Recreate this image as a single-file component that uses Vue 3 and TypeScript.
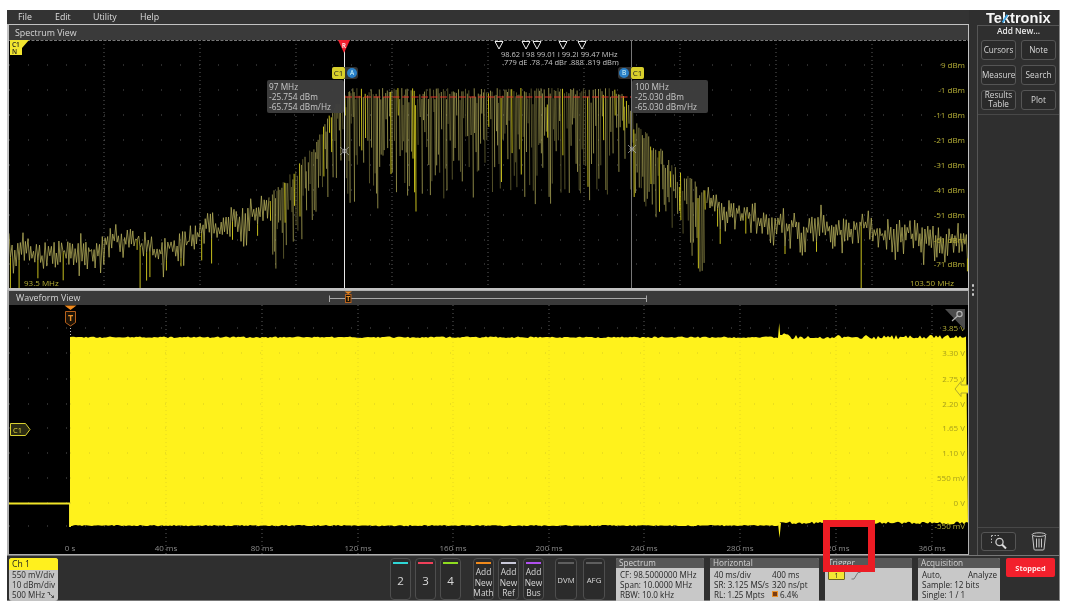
<script setup lang="ts">
function rng(seed: number) {
  let s = seed
  return () => {
    s = (s * 1664525 + 1013904223) >>> 0
    return s / 4294967296
  }
}
const envPts: [number, number][] = [
  [9, 230], [60, 229], [150, 229], [200, 220], [250, 204], [280, 186], [310, 150], [335, 105], [350, 88],
  [620, 88], [640, 125], [680, 170], [710, 192], [740, 204], [968, 217],
]
function env(x: number) {
  for (let i = 1; i < envPts.length; i++) {
    const [a, b] = envPts[i - 1]
    const [c, d] = envPts[i]
    if (x <= c) return b + ((x - a) / (c - a)) * (d - b)
  }
  return 217
}
const r = rng(7)
let dim = ''
let dark = ''
let bright = ''
let walk = 0
let up = true
let x = 9
let connected = false
while (x < 968) {
  const e = env(x)
  const dense = x > 270 && x < 705
  if (dense) {
    const central = x > 345 && x < 625
    const top = e + r() * r() * (central ? 20 : 24)
    const reach = central ? 22 + r() * 92 : 14 + r() * 66
    const lo = top + reach
    const seg = `M${x.toFixed(1)} ${top.toFixed(1)}L${(x + 0.4).toFixed(1)} ${lo.toFixed(1)}`
    const pick = r()
    if (pick < 0.6) dim += seg
    else if (pick < 0.87) dark += seg
    else bright += seg
    x += 1.1 + r() * 1.2
    connected = false
  } else {
    walk = Math.max(-9, Math.min(9, walk + (r() - 0.5) * 7))
    const mid = e + 18 + walk
    const y = up ? mid - r() * 14 : mid + r() * 8 + r() * r() * 26
    dim += `${connected ? 'L' : 'M'}${x.toFixed(1)} ${y.toFixed(1)}`
    connected = true
    if (!up && r() < 0.12) {
      const deep = r() < 0.12 ? 288 : y + 8 + r() * 22
      bright += `M${x.toFixed(1)} ${y.toFixed(1)}V${deep.toFixed(1)}`
    }
    up = !up
    x += 1 + r() * 0.7
  }
}
const traceDim = dim
const traceDark = dark
const traceBright = bright

const r2 = rng(21)
let top = 'M70 526V337'
for (let px = 70; px < 968; px += 2) {
  const y = px < 779 ? 336.5 + r2() * 1.5 : px < 790 ? 333 + r2() * 2 : 335 + r2() * 4.5
  top += `L${px} ${y.toFixed(1)}`
}
let bot = ''
for (let px = 968; px > 70; px -= 2) {
  const y = px < 779 ? 525 + r2() * 1.2 : 521.5 + r2() * 3
  bot += `L${px} ${y.toFixed(1)}`
}
const wavePath = top + bot + 'Z'

const gridX1 = [104, 200, 296, 392, 488, 584, 680, 776, 872]
const gridY1 = [65, 90, 115, 140, 165, 190, 215, 240, 264]
const gridX2 = [166, 262, 358, 453, 549, 644, 740, 836, 932]
const gridY2 = [328, 353, 379, 404, 428, 453, 478, 503, 526]
const dbm = ['9 dBm', '-1 dBm', '-11 dBm', '-21 dBm', '-31 dBm', '-41 dBm', '-51 dBm', '-61 dBm', '-71 dBm']
const volts = ['3.85 V', '3.30 V', '2.75 V', '2.20 V', '1.65 V', '1.10 V', '550 mV', '0 V', '-550 mV']
const times = ['0 s', '40 ms', '80 ms', '120 ms', '160 ms', '200 ms', '240 ms', '280 ms', '320 ms', '360 ms']
const timeX = [70, 166, 262, 358, 453, 549, 644, 740, 836, 932]
const markers = [499, 526, 537, 563, 582]
const menu = ['File', 'Edit', 'Utility', 'Help']
const tools = ['Cursors', 'Note', 'Measure', 'Search', 'Results Table', 'Plot']
const channels = [
  { label: '2', color: '#2fd6d6' },
  { label: '3', color: '#f0405a' },
  { label: '4', color: '#8fdc20' },
]
const adds = [
  { lines: ['Add', 'New', 'Math'], color: '#f08a1c' },
  { lines: ['Add', 'New', 'Ref'], color: '#c8c8d8' },
  { lines: ['Add', 'New', 'Bus'], color: '#b050f0' },
]
</script>

<template>
  <div class="page">
    <div class="scope">
      <div class="upper">
        <div class="left">
          <div class="menu">
            <span v-for="m in menu" :key="m" class="menu-item">{{ m }}</span>
          </div>
          <div class="view view-spectrum">
            <div class="title">Spectrum View</div>
            <div class="plot plot-a">
              <svg class="canvas" width="959" height="248" viewBox="9 40 959 248">
                <line x1="9" x2="968" y1="40.5" y2="40.5" class="edge" />
                <line v-for="gx in gridX1" :key="gx" :x1="gx" :x2="gx" y1="40" y2="288" class="vdot" />
                <line v-for="gy in gridY1" :key="gy" x1="9" x2="968" :y1="gy" :y2="gy" class="hdot" />
                <path :d="traceDark" class="trace-dark" />
                <path :d="traceDim" class="trace" />
                <path :d="traceBright" class="trace-bright" />
                <line x1="345" x2="631" y1="97" y2="97" class="refline" />
                <line x1="344.5" x2="344.5" y1="50" y2="288" class="cursor-a" />
                <line x1="631.5" x2="631.5" y1="40" y2="288" class="cursor-b" />
                <g class="xmark">
                  <circle cx="344.5" cy="151" r="2" />
                  <path d="M340 147l9 8M349 147l-9 8" />
                  <circle cx="632" cy="149" r="2" />
                  <path d="M628 145l8 8M636 145l-8 8" />
                </g>
                <path d="M338 40H350L344 53Z" class="rmark" />
                <text x="344" y="47.5" text-anchor="middle" class="rtext">R</text>
                <path d="M10 40H29L22 48V55H10Z" class="cn" />
                <text x="12" y="46.5" class="cn-text">C1</text>
                <text x="12" y="53.5" class="cn-text">N</text>
                <path v-for="mx in markers" :key="mx" :d="`M${mx - 4} 41.5H${mx + 4}L${mx} 49Z`" class="marker" />
                <text x="501" y="56.5" class="mk">98.62 I 98 99.01 I 99.2I 99.47 MHz</text>
                <text x="502" y="64.5" class="mk">.779 dE .78 .74 dBr .888 .819 dBm</text>
                <text v-for="(t, i) in dbm" :key="t" x="965" :y="gridY1[i] + 3" text-anchor="end" class="axis">{{ t }}</text>
                <text x="24" y="286" class="axis">93.5 MHz</text>
                <text x="954" y="286" text-anchor="end" class="axis">103.50 MHz</text>
              </svg>
              <div class="tag tag-a"><b class="c1">C1</b><i class="dot">A</i></div>
              <div class="tag tag-b"><i class="dot">B</i><b class="c1">C1</b></div>
              <div class="readout readout-a">97 MHz<br />-25.754 dBm<br />-65.754 dBm/Hz</div>
              <div class="readout readout-b">100 MHz<br />-25.030 dBm<br />-65.030 dBm/Hz</div>
            </div>
          </div>
          <div class="view view-wave">
            <div class="title title-wave">
              Waveform View
              <svg class="bracket" width="959" height="14" viewBox="9 291 959 14">
                <path d="M329.5 302V295.5M329.5 298.5H646.5M646.5 295.5V302" class="brk" />
                <path d="M344.5 291.5H352L348.2 294Z" class="orange-fill" />
                <rect x="345.5" y="294.5" width="5.5" height="8" class="t-box" />
                <text x="348.2" y="301" text-anchor="middle" class="t-small">T</text>
              </svg>
            </div>
            <div class="plot plot-b">
              <svg class="canvas" width="959" height="249" viewBox="9 305 959 249">
                <line v-for="gx in gridX2" :key="gx" :x1="gx" :x2="gx" y1="305" y2="554" class="vdot" />
                <line v-for="gy in gridY2" :key="gy" x1="9" x2="968" :y1="gy" :y2="gy" class="hdot" />
                <line x1="70.5" x2="70.5" y1="325" y2="337" class="vdot bright-dot" />
                <path d="M9 503.5H70" class="flat" />
                <path d="M70 503V527" class="flat" />
                <path :d="wavePath" class="wave" />
                <path d="M778 338L779.2 323L780.4 338Z M778 523L779.5 538L781 523Z" class="wave" />
                <line v-for="gx in gridX2" :key="'o' + gx" :x1="gx" :x2="gx" y1="338" y2="524" class="vover" />
                <line v-for="gy in gridY2.slice(1, 8)" :key="'p' + gy" x1="70" x2="968" :y1="gy" :y2="gy" class="hover" />
                <text v-for="(t, i) in volts" :key="t" x="965" :y="gridY2[i] + 3" text-anchor="end" :class="i === 0 || i === 8 ? 'axis' : 'axis-on'">{{ t }}</text>
                <text v-for="(t, i) in times" :key="t" :x="timeX[i]" y="551" text-anchor="middle" class="axis-time">{{ t }}</text>
                <path d="M64.5 305.5H76.5L70.5 310Z" class="orange-fill" />
                <path d="M65.5 311.5H75.5V322.5L70.5 326L65.5 322.5Z" class="t-box" />
                <text x="70.5" y="320.5" text-anchor="middle" class="t-big">T</text>
                <path d="M945 309H965V330Z" class="zoomcorner" />
                <circle cx="959.5" cy="314" r="2.6" class="zoomglass" />
                <path d="M957.5 316L952 321" class="zoomglass" />
                <path d="M968 385H961V381.5L955 389L961 396.5V393H968" class="arrow" />
                <path d="M10.5 423.5H25.5L30 429.5L25.5 435.5H10.5Z" class="c1tag" />
                <text x="13" y="432.5" class="c1tag-text">C1</text>
              </svg>
            </div>
          </div>
        </div>
        <div class="gutter"><i></i><i></i><i></i></div>
        <aside class="side">
          <div class="logo">Te<span class="logo-k">k</span>tronix</div>
          <div class="panel">
            <div class="add">Add New...</div>
            <div class="tools">
              <button v-for="t in tools" :key="t" class="tool">{{ t }}</button>
            </div>
            <div class="rule"></div>
            <div class="panel-fill"></div>
            <div class="rule"></div>
            <div class="panel-foot">
              <button class="tool zoom-btn">
                <svg width="18" height="16" viewBox="0 0 18 16">
                  <path d="M1.5 1.5H9M1.5 1.5V9" class="dash" />
                  <circle cx="9.5" cy="8" r="3.6" class="glass" />
                  <path d="M12 10.5L16 14.5" class="handle" />
                </svg>
              </button>
              <svg class="trash" width="16" height="19" viewBox="0 0 16 19">
                <ellipse cx="8" cy="2.6" rx="6.8" ry="1.8" />
                <path d="M1.5 3.5L3 17.2Q3.2 18 4 18H12Q12.8 18 13 17.2L14.5 3.5M5.5 6.5V15.5M8 6.5V15.5M10.5 6.5V15.5" />
              </svg>
            </div>
          </div>
        </aside>
      </div>
      <div class="bottom">
        <div class="ch">
          <div class="ch-head">Ch 1</div>
          <div class="ch-body">
            <div>550 mV/div</div>
            <div>10 dBm/div</div>
            <div class="ch-last">500 MHz
              <svg width="7" height="6" viewBox="0 0 7 6"><path d="M0.5 0.5H2.5V3M3.5 2.5L6.5 5.5M6.5 3.5V5.5H4.5" class="bw" /></svg>
            </div>
          </div>
        </div>
        <div class="group group-ch">
          <button v-for="c in channels" :key="c.label" class="key key-num">
            <span class="bar" :style="{ background: c.color }"></span>{{ c.label }}
          </button>
        </div>
        <div class="group group-add">
          <button v-for="a in adds" :key="a.lines[2]" class="key key-add">
            <span class="bar" :style="{ background: a.color }"></span>
            <span v-for="l in a.lines" :key="l" class="key-line">{{ l }}</span>
          </button>
        </div>
        <div class="group group-tool">
          <button class="key key-wide"><span class="bar bar-off"></span>DVM</button>
          <button class="key key-wide"><span class="bar bar-off"></span>AFG</button>
        </div>
        <section class="card card-spec">
          <header>Spectrum</header>
          <div class="card-body">
            <div>CF: 98.5000000 MHz</div>
            <div>Span: 10.0000 MHz</div>
            <div>RBW: 10.0 kHz</div>
          </div>
        </section>
        <section class="card card-hor">
          <header>Horizontal</header>
          <div class="card-body cols">
            <span>40 ms/div</span><span>400 ms</span>
            <span>SR: 3.125 MS/s</span><span>320 ns/pt</span>
            <span>RL: 1.25 Mpts</span><span><i class="rl-icon"></i> 6.4%</span>
          </div>
        </section>
        <section class="card card-trig">
          <header>Trigger</header>
          <div class="card-body trig">
            <span class="trig-src">1</span>
            <svg width="10" height="9" viewBox="0 0 10 9"><path d="M0.5 8H3L7 1.5H9.5" class="slope" /></svg>
          </div>
        </section>
        <section class="card card-acq">
          <header>Acquisition</header>
          <div class="card-body">
            <div class="between"><span>Auto,</span><span>Analyze</span></div>
            <div>Sample: 12 bits</div>
            <div>Single: 1 / 1</div>
          </div>
        </section>
        <button class="stopped">Stopped</button>
      </div>
    </div>
    <div class="callout"></div>
  </div>
</template>

<style>
html, body { margin: 0; background: #fff; }
</style>

<style scoped>
.page {
  position: relative;
  width: 1071px;
  height: 607px;
  box-sizing: border-box;
  padding: 10px 11px 6px 7px;
  font-family: "Open Sans", "Liberation Sans", sans-serif;
  overflow: hidden;
  background: #fff;
}
.scope {
  width: 1053px;
  height: 591px;
  display: flex;
  flex-direction: column;
  background: #2f2f2f;
  border-right: 1px solid #888;
  border-bottom: 1px solid #777;
  box-sizing: border-box;
  color: #ddd;
  filter: blur(0.25px);
}
.upper { display: flex; height: 545px; }
.left { width: 962px; display: flex; flex-direction: column; }
.menu {
  height: 14px;
  display: flex;
  align-items: center;
  padding-left: 11px;
  font-size: 8.8px;
  color: #ddd;
  background: #333;
}
.menu-item { width: 37px; }
.menu-item:nth-child(2) { width: 38px; }
.menu-item:nth-child(3) { width: 47px; }
.view { border: 1px solid #c2c2c2; border-left-width: 2px; box-sizing: border-box; border-top-width: 1px; }
.view-spectrum { height: 266px; border-bottom-width: 2px; }
.view-wave { height: 265px; border-bottom-width: 1px; border-color: #b0b0b0; }
.title {
  height: 15px;
  line-height: 15px;
  padding-left: 6px;
  font-size: 8.9px;
  color: #d6d6d6;
  background: #3a3a3a;
}
.title-wave { height: 14px; line-height: 14px; position: relative; padding-left: 7px; }
.bracket { position: absolute; left: 0; top: 0; }
.plot { position: relative; background: #000; overflow: hidden; }
.plot-a { height: 248px; }
.plot-b { height: 249px; }
.canvas { display: block; }
.edge { stroke: #777; stroke-width: 1; stroke-dasharray: 3 1.5; }
.vdot { stroke: #5c5c5c; stroke-width: 1; stroke-dasharray: 1 3; }
.hdot { stroke: #565656; stroke-width: 1; stroke-dasharray: 1 18; }
.bright-dot { stroke: #bbb; stroke-dasharray: 1 2; }
.trace { fill: none; stroke: #b8b25c; stroke-width: 0.75; }
.trace-dark { fill: none; stroke: #5e5a2e; stroke-width: 0.9; }
.trace-bright { fill: none; stroke: #dcd420; stroke-width: 0.9; }
.refline { stroke: #e0302a; stroke-width: 1; stroke-dasharray: 7 2.5; }
.cursor-a { stroke: #e8e8e8; stroke-width: 1; }
.cursor-b { stroke: #777; stroke-width: 1; }
.xmark circle, .xmark path { fill: none; stroke: #b0b0b0; stroke-width: 0.7; }
.rmark { fill: #f4202f; }
.rtext { font-size: 6.5px; font-weight: 700; fill: #ffd8d8; }
.cn { fill: #f2e530; }
.cn-text { font-size: 6.5px; font-weight: 600; fill: #222; }
.marker { fill: #000; stroke: #eee; stroke-width: 1; }
.mk { font-size: 7.5px; fill: #c4c4c4; }
.axis { font-size: 8px; fill: #b5ae35; }
.axis-on { font-size: 8px; fill: #a8a01c; }
.axis-time { font-size: 8px; fill: #8c8c8c; }
.flat { stroke: #f0e428; stroke-width: 2; fill: none; }
.wave { fill: #fff21c; }
.vover { stroke: #e6d820; stroke-width: 1; stroke-dasharray: 1 3; }
.hover { stroke: #d8cc20; stroke-width: 1; stroke-dasharray: 1 18; }
.orange-fill { fill: #ef8a1e; }
.t-box { fill: #1c1206; stroke: #b5601c; stroke-width: 1; }
.t-small { font-size: 7px; font-weight: 700; fill: #e8902a; }
.t-big { font-size: 9px; font-weight: 700; fill: #e8902a; }
.brk { fill: none; stroke: #a8a8a8; stroke-width: 1; }
.zoomcorner { fill: #4c4c4c; }
.zoomglass { fill: none; stroke: #b4b4b4; stroke-width: 1.2; }
.arrow { fill: #fff21c; stroke: #a8a030; stroke-width: 0.9; }
.c1tag { fill: #2a2a12; stroke: #d8d030; stroke-width: 1; }
.c1tag-text { font-size: 7.5px; fill: #e2d838; }
.tag { position: absolute; top: 27px; height: 12px; display: flex; align-items: center; gap: 1px; background: #333; border-radius: 3px; }
.tag-a { left: 323px; }
.tag-b { left: 609px; }
.c1 {
  width: 13px;
  height: 12px;
  border-radius: 2px;
  background: #d8cf2c;
  color: #222;
  font-size: 8px;
  font-weight: 400;
  line-height: 12px;
  text-align: center;
}
.dot {
  width: 10px;
  height: 10px;
  margin: 0 1px;
  border-radius: 50%;
  background: #2a80c8;
  color: #dff;
  font-size: 6.5px;
  font-style: normal;
  line-height: 10px;
  text-align: center;
}
.readout {
  position: absolute;
  top: 40px;
  height: 33px;
  box-sizing: border-box;
  padding: 1.5px 2px;
  border-radius: 2px;
  background: rgba(62, 62, 62, 0.96);
  color: #c8c8c8;
  font-size: 8.3px;
  line-height: 10px;
  white-space: nowrap;
}
.readout-a { left: 258px; width: 77px; }
.readout-b { left: 623px; width: 76px; padding-left: 3px; }
.gutter {
  width: 8px;
  height: 545px;
  box-sizing: border-box;
  padding-top: 274px;
  display: flex;
  flex-direction: column;
  align-items: center;
  gap: 2px;
}
.gutter i { width: 2.5px; height: 2.5px; border-radius: 50%; background: #c8c8c8; }
.side { width: 82px; display: flex; flex-direction: column; }
.logo {
  position: relative;
  height: 15px;
  padding-left: 9px;
  font-family: "Liberation Sans", sans-serif;
  font-size: 14.6px;
  line-height: 16px;
  font-weight: 700;
  color: #f6f6f6;
  white-space: nowrap;
}
.logo-k::after {
  content: "";
  position: absolute;
  left: 27px;
  top: 4px;
  width: 1.5px;
  height: 9px;
  background: #3aa0e0;
  transform: rotate(32deg);
}
.panel {
  flex: 1;
  display: flex;
  flex-direction: column;
  border-left: 1px solid #555;
  border-top: 1px solid #555;
}
.add { height: 14px; line-height: 9px; text-align: center; font-size: 8.4px; font-weight: 600; color: #e8e8e8; }
.tools {
  display: grid;
  grid-template-columns: 35px 35px;
  grid-auto-rows: 19.5px;
  gap: 5.5px 5px;
  padding-left: 3px;
}
.tool {
  padding: 0;
  border: 1px solid #555;
  border-radius: 3px;
  background: #2a2a2a;
  color: #d8d8d8;
  font-family: inherit;
  font-size: 8.2px;
  line-height: 8.5px;
}
.rule { height: 1px; background: #484848; margin-top: 4px; }
.panel-fill { flex: 1; }
.panel-foot { height: 27px; display: flex; align-items: center; padding-left: 3px; }
.zoom-btn { width: 35px; height: 19px; display: flex; align-items: center; justify-content: center; }
.dash { fill: none; stroke: #bbb; stroke-width: 1; stroke-dasharray: 1.5 1.5; }
.glass { fill: none; stroke: #ccc; stroke-width: 1.3; }
.handle { fill: none; stroke: #ddd; stroke-width: 2; }
.trash { margin-left: 15px; fill: none; stroke: #c8c8c8; stroke-width: 1; }
.bottom {
  height: 45px;
  display: flex;
  align-items: flex-start;
  padding: 2px 0 0 2px;
  box-sizing: border-box;
  border-top: 1px solid #777;
  color: #222;
}
.ch { width: 49px; height: 43px; border-radius: 3px; overflow: hidden; background: #c4c4c4; }
.ch-head {
  height: 12px;
  line-height: 12px;
  padding-left: 3px;
  background: #fff01e;
  color: #222;
  font-size: 8.6px;
}
.ch-body { padding: 0 0 0 3px; font-size: 8.1px; line-height: 10px; color: #2a2a2a; white-space: nowrap; }
.bw { fill: none; stroke: #333; stroke-width: 0.8; }
.group { display: flex; height: 42px; }
.group-ch { margin-left: 332px; gap: 4px; }
.group-add { margin-left: 12px; gap: 4px; }
.group-tool { margin-left: 11px; gap: 6px; }
.key {
  position: relative;
  padding: 0;
  border: 1px solid #4e4e4e;
  border-radius: 4px;
  background: #2b2b2b;
  color: #d8d8d8;
  font-family: inherit;
}
.bar { position: absolute; left: 2px; right: 2px; top: 3px; height: 2px; }
.bar-off { background: #5e5e5e; }
.key-num { width: 21px; height: 42px; font-size: 11.5px; padding-top: 3px; }
.key-add {
  width: 21px;
  height: 42px;
  display: flex;
  flex-direction: column;
  align-items: center;
  padding-top: 8px;
  font-size: 8.4px;
  line-height: 10.5px;
}
.key-line { display: block; white-space: nowrap; }
.key-wide { width: 22px; height: 42px; font-size: 7.8px; padding-top: 2px; }
.card { height: 43px; background: #c8c8c8; border-radius: 2px 2px 0 0; overflow: hidden; }
.card header {
  height: 10px;
  line-height: 10px;
  padding-left: 3px;
  background: #575757;
  color: #d4d4d4;
  font-size: 8.2px;
}
.card-body { padding: 1.5px 0 0 4px; font-size: 8.1px; line-height: 10.4px; color: #262626; white-space: nowrap; }
.card-spec { width: 88px; margin-left: 11px; }
.card-hor { width: 109px; margin-left: 6px; }
.card-trig { width: 87px; margin-left: 6px; }
.card-acq { width: 82px; margin-left: 6px; }
.cols { display: grid; grid-template-columns: 58px auto; }
.rl-icon { display: inline-block; width: 4px; height: 4px; background: #7a3c10; outline: 1px solid #e8902a; vertical-align: 2px; margin: 0 1px; }
.trig { display: flex; align-items: center; gap: 6px; padding: 3px 0 0 3px; }
.trig-src {
  width: 15px;
  height: 7px;
  line-height: 7px;
  text-align: center;
  font-size: 7px;
  background: #f4e634;
  border: 1px solid #6a6420;
  border-radius: 1px;
}
.slope { fill: none; stroke: #777; stroke-width: 1; }
.between { display: flex; justify-content: space-between; padding-right: 3px; }
.stopped {
  width: 49px;
  height: 19px;
  margin-left: 6px;
  padding: 0;
  border: 0;
  border-radius: 2px;
  background: #f2202c;
  color: #ffe8e8;
  font-family: inherit;
  font-size: 7.4px;
  font-weight: 700;
}
.callout {
  position: absolute;
  left: 823px;
  top: 520px;
  width: 52px;
  height: 52px;
  box-sizing: border-box;
  border: 7px solid #ed1c24;
}
</style>
